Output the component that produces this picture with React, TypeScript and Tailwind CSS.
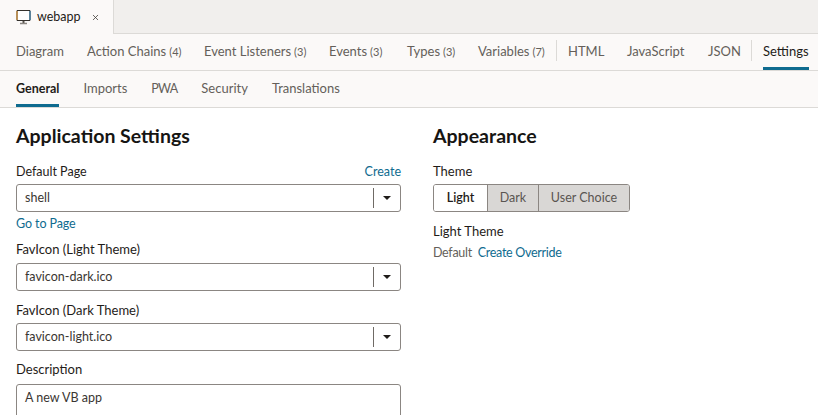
import { X } from "lucide-react";

const TOP_TABS = [
  { label: "Diagram", w: "w-[71px]" },
  { label: "Action Chains", count: "(4)", w: "w-[117px]" },
  { label: "Event Listeners", count: "(3)", w: "w-[125px]" },
  { label: "Events", count: "(3)", w: "w-[78px]" },
  { label: "Types", count: "(3)", w: "w-[71px]" },
  { label: "Variables", count: "(7)", w: "w-[78px]" },
];

function MonitorIcon() {
  return (
    <svg width="15" height="15" viewBox="0 0 15 15" fill="none">
      <path d="M1 .5h13v10H1z" fill="#fff" stroke="#33302c" strokeWidth="1" />
      <path d="M1 1v9" stroke="#d98a1e" strokeWidth="1" />
      <path d="M14 1v9" stroke="#1f6f9f" strokeWidth="1" />
      <path d="M7.5 11v2.5" stroke="#55504b" strokeWidth="2" />
      <path d="M4 13.5h7" stroke="#8b8682" strokeWidth="1.5" />
    </svg>
  );
}

function Select({ value }: { value: string }) {
  return (
    <div className="flex h-[28px] w-[385px] items-center rounded-[3px] border border-[#8b8682] bg-white">
      <span className="flex-1 pl-[8px] text-[12.5px] text-[#3a3632]">{value}</span>
      <span className="h-[20px] w-px bg-[#6f6a65]" />
      <span className="flex w-[26px] justify-center">
        <span className="h-0 w-0 border-x-[4px] border-t-[4px] border-x-transparent border-t-[#1f1c19]" />
      </span>
    </div>
  );
}

function Label({ children }: { children: string }) {
  return <div className="text-[13px] leading-[17px] text-[#1f1c19]">{children}</div>;
}

export default function App() {
  return (
    <div className="h-[415px] w-[818px] overflow-hidden bg-white font-['Lato',sans-serif]">
      <div className="flex h-[34px] border-b border-[#dcdad7] bg-[#f1efed]">
        <div className="-mb-px flex h-[34px] w-[114px] items-center border-r border-[#dcdad7] bg-[#fbf9f8] pl-[16px]">
          <MonitorIcon />
          <span className="ml-[6px] text-[12.5px] text-[#1f1c19]">webapp</span>
          <X className="ml-[10px] h-[9px] w-[9px] text-[#3a3632]" strokeWidth={2} />
        </div>
      </div>

      <div className="flex h-[37px] border-b border-[#dcdad7] bg-[#fbf9f8] pl-[16px] text-[13px] text-[#645f5a]">
        {TOP_TABS.map((t) => (
          <div key={t.label} className={`flex items-center ${t.w}`}>
            {t.label}
            {t.count && <span className="ml-[3px] text-[11px]">{t.count}</span>}
          </div>
        ))}
        <span className="mt-[6px] h-[21px] w-px bg-[#dcdad7]" />
        <div className="ml-[11px] flex w-[59px] items-center">HTML</div>
        <div className="flex w-[81px] items-center">JavaScript</div>
        <div className="flex w-[43px] items-center">JSON</div>
        <span className="mt-[6px] h-[21px] w-px bg-[#dcdad7]" />
        <div className="ml-[11px] flex h-[36px] items-center border-b-[3px] border-[#0f6b8f] pt-[3px] text-[#1f1c19]">
          Settings
        </div>
      </div>

      <div className="flex h-[37px] gap-[24px] border-b border-[#dcdad7] bg-[#fbf9f8] pl-[16px] text-[13px] text-[#645f5a]">
        <div className="flex h-[36px] items-center border-b-[3px] border-[#0f6b8f] pt-[3px] text-[12.5px] font-bold text-[#1f1c19]">
          General
        </div>
        <div className="flex items-center">Imports</div>
        <div className="flex items-center text-[12.5px] tracking-[-0.8px]">PWA</div>
        <div className="flex items-center">Security</div>
        <div className="flex items-center">Translations</div>
      </div>

      <div className="flex pl-[16px] pt-[16px]">
        <div className="w-[385px]">
          <h2 className="text-[19.5px] font-bold leading-[24px] text-[#161513]">Application Settings</h2>
          <div className="mt-[15px] flex justify-between">
            <div className="text-[12.5px] leading-[17px] text-[#1f1c19]">Default Page</div>
            <span className="text-[12.5px] leading-[17px] text-[#0f6b8f]">Create</span>
          </div>
          <div className="mt-[4px]"><Select value="shell" /></div>
          <div className="mt-[3px] text-[12.5px] leading-[17px] tracking-[-0.1px] text-[#0f6b8f]">Go to Page</div>
          <div className="mt-[9px]"><Label>FavIcon (Light Theme)</Label></div>
          <div className="mt-[5px]"><Select value="favicon-dark.ico" /></div>
          <div className="mt-[11px]"><Label>FavIcon (Dark Theme)</Label></div>
          <div className="mt-[4px]"><Select value="favicon-light.ico" /></div>
          <div className="mt-[10px]"><Label>Description</Label></div>
          <div className="mt-[6px] h-[60px] rounded-[3px] border border-[#8b8682] bg-white pl-[8px] pt-[4px] text-[12.5px] text-[#3a3632]">
            A new VB app
          </div>
        </div>

        <div className="ml-[32px]">
          <h2 className="text-[19.5px] font-bold leading-[24px] text-[#161513]">Appearance</h2>
          <div className="mt-[15px]"><Label>Theme</Label></div>
          <div className="mt-[4px] flex h-[28px] w-[197px] overflow-hidden rounded-[3px] border border-[#8b8682] text-[12.5px]">
            <div className="flex w-[53px] items-center justify-center bg-white font-semibold text-[#1f1c19]">Light</div>
            <div className="flex w-[51px] items-center justify-center border-l border-[#8b8682] bg-[#d9d7d5] text-[#5a5551]">Dark</div>
            <div className="flex flex-1 items-center justify-center border-l border-[#8b8682] bg-[#d9d7d5] text-[#5a5551]">User Choice</div>
          </div>
          <div className="mt-[11px]"><Label>Light Theme</Label></div>
          <div className="mt-[4px] flex gap-[6px] text-[12.5px] leading-[17px] tracking-[-0.3px]">
            <span className="text-[#645f5a]">Default</span>
            <span className="text-[#0f6b8f]">Create Override</span>
          </div>
        </div>
      </div>
    </div>
  );
}
